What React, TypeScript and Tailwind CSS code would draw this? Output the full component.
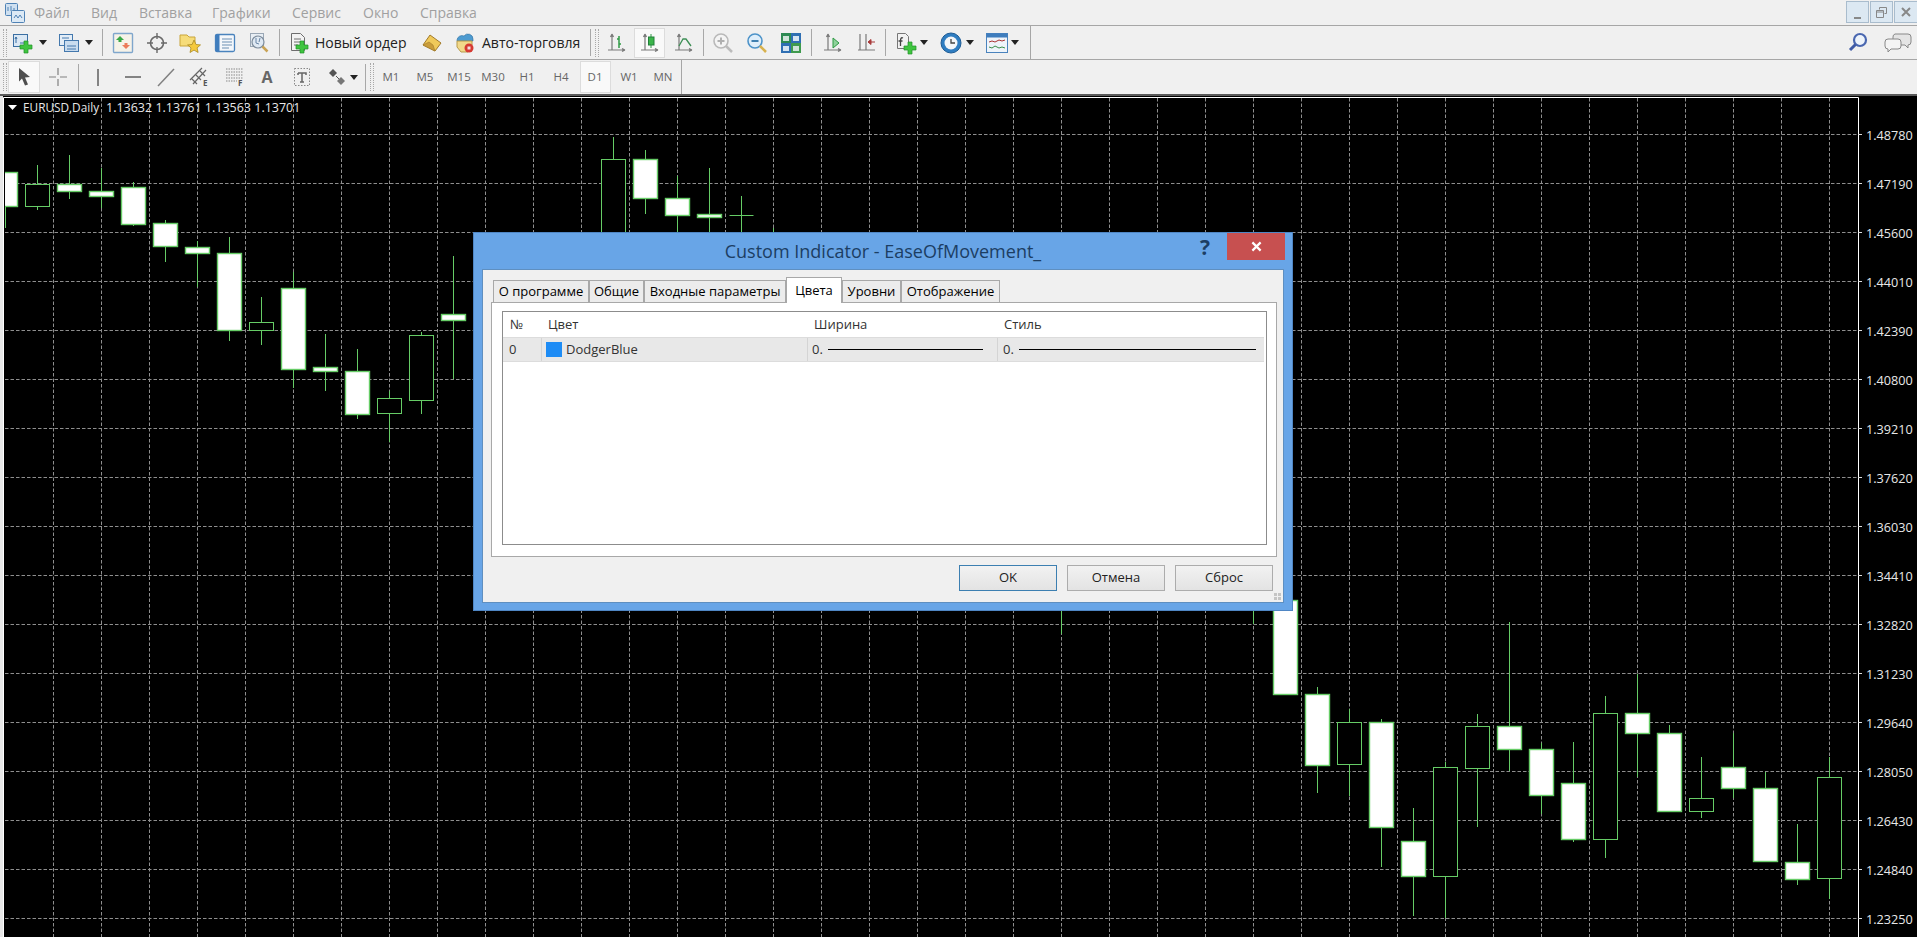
import React from 'react';

// [index, wickTop, wickBottom, bodyTop, bodyBottom, filled]
const CANDLES: [number, number, number, number, number, boolean][] = [
  [0, 172, 228, 172, 206, true], [1, 165, 210, 184, 206, false], [2, 155, 199, 184, 191, true],
  [3, 168, 208, 191, 196, true], [4, 182, 226, 187, 224, true], [5, 220, 262, 223, 246, true],
  [6, 241, 287, 247, 253, true], [7, 237, 341, 253, 330, true], [8, 297, 345, 322, 330, false],
  [9, 272, 388, 288, 369, true], [10, 334, 391, 367, 371, true], [11, 349, 419, 371, 414, true],
  [12, 391, 442, 398, 413, false], [13, 332, 414, 335, 400, false], [14, 256, 379, 314, 320, true],
  [19, 137, 260, 159, 260, false], [20, 150, 214, 159, 198, true], [21, 176, 240, 198, 215, true],
  [22, 168, 240, 214, 217, true], [23, 196, 240, 215, 215, false], [24, 228, 240, 240, 240, false],
  [33, 600, 634, 634, 634, false], [39, 600, 624, 624, 624, false], [40, 600, 695, 600, 694, true],
  [41, 687, 793, 694, 765, true], [42, 709, 796, 722, 764, false], [43, 719, 867, 722, 827, true],
  [44, 808, 916, 841, 876, true], [45, 762, 918, 767, 876, false], [46, 714, 827, 726, 768, false],
  [47, 622, 771, 726, 749, true], [48, 743, 814, 749, 795, true], [49, 742, 842, 783, 839, true],
  [50, 696, 858, 713, 839, false], [51, 674, 777, 713, 733, true], [52, 725, 812, 733, 811, true],
  [53, 757, 818, 798, 811, false], [54, 733, 798, 767, 788, true], [55, 772, 862, 788, 861, true],
  [56, 824, 885, 862, 879, true], [57, 757, 899, 777, 878, false],
];

const PRICES = ['1.48780', '1.47190', '1.45600', '1.44010', '1.42390', '1.40800', '1.39210', '1.37620', '1.36030',
  '1.34410', '1.32820', '1.31230', '1.29640', '1.28050', '1.26430', '1.24840', '1.23250'];

const GREEN = '#66cc66';
const GRID = '#8e8e8e';

const Chart = () => (
  <svg viewBox="3 96 1914 841" className="h-[841px] w-[1914px] bg-black">
    <defs>
      <clipPath id="plot"><rect x="5" y="98" width="1853" height="839" /></clipPath>
    </defs>
    <g stroke={GRID} strokeDasharray="3.500 2">
      {Array.from({ length: 38 }, (_, k) => (
        <line key={k} x1={53.5 + 48 * k} y1="98" x2={53.5 + 48 * k} y2="937" />
      ))}
      {PRICES.map((_, k) => (
        <line key={k} x1="5" y1={134.5 + 49 * k} x2="1858" y2={134.5 + 49 * k} />
      ))}
    </g>
    <g clipPath="url(#plot)" stroke={GREEN}>
      {CANDLES.map(([i, wt, wb, bt, bb, filled]) => {
        const x = 5.5 + 32 * i;
        return (
          <g key={i}>
            <line x1={x} y1={wt} x2={x} y2={wb} />
            {bb > bt && <rect x={x - 12} y={bt + 0.5} width="24" height={bb - bt} fill={filled ? '#fff' : '#000'} strokeWidth={filled ? 1.4 : 1} />}
            {bb === bt && bt !== 634 && bt !== 624 && bt !== 240 && <line x1={x - 12} y1={bt + 0.5} x2={x + 12} y2={bt + 0.5} />}
          </g>
        );
      })}
    </g>
    <path d="M3.5 937V97.5H1858.5V937" fill="none" stroke="#fff" />
    {PRICES.map((p, k) => (
      <g key={p}>
        <line x1="1858" y1={134.5 + 49 * k} x2="1862" y2={134.5 + 49 * k} stroke="#ddd" />
        <text x="1866" y={139.5 + 49 * k} fill="#e8e8e8" fontSize="12.700">{p}</text>
      </g>
    ))}
    <path d="M8 105h9l-4.5 5z" fill="#fff" />
    <text x="23" y="112" fill="#e8e8e8" fontSize="11.800">EURUSD,Daily</text>
    <text x="106" y="112" fill="#e8e8e8" fontSize="12.500">1.13632 1.13761 1.13563 1.13701</text>
  </svg>
);

const I = ({ children }: { children: React.ReactNode }) => (
  <svg viewBox="0 0 22 22" className="h-[22px] w-[22px] overflow-visible" fill="none">{children}</svg>
);

const Plus = ({ x = 0, y = 0 }: { x?: number; y?: number }) => (
  <path transform={`translate(${x} ${y})`} d="M12 9h4v4h4v4h-4v4h-4v-4H8v-4h4z" fill="#3fc53f" stroke="#1f8f2a" strokeWidth=".7" />
);

const Axes = () => (
  <path d="M6 2v16M2 18h17M6 2 4.500 5M6 2l1.500 3M19 18l-3-1.500M19 18l-3 1.500" stroke="#7a7a7a" strokeWidth="1.200" />
);

const Logo = () => (
  <svg viewBox="0 0 20 20" className="h-[20px] w-[20px]" fill="none">
    <rect x=".5" y=".5" width="12" height="12" rx="1" fill="#cfe0f0" stroke="#4f82b5" />
    <path d="M3 8V4M6 8V3M9 8V5" stroke="#4f82b5" />
    <rect x="6.500" y="7.500" width="13" height="12" rx="1" fill="#dce9f5" stroke="#4f82b5" />
    <path d="M9 15l2-3 2 3 2-3 2 3" stroke="#4f82b5" />
  </svg>
);

const AddChart = () => (
  <I>
    <rect x="1.500" y="2.500" width="14" height="12" fill="#dbe8f4" stroke="#3b6fa3" />
    <path d="M4 5v6M8 11h5M4 5 3 7M4 5l1 2" stroke="#3b6fa3" />
    <Plus />
  </I>
);
const Profiles = () => (
  <I>
    <rect x="1.500" y="2.500" width="13" height="11" fill="#e3edf7" stroke="#4478ad" />
    <rect x="6.500" y="8.500" width="14" height="11" fill="#c9dcef" stroke="#4478ad" />
    <path d="M4 6h7M9 14h9M9 17h9" stroke="#4478ad" />
  </I>
);
const MarketWatch = () => (
  <I>
    <rect x="1.500" y="1.500" width="19" height="19" rx="1" fill="#f6f2e8" stroke="#7fa6cc" strokeWidth="1.400" />
    <path d="M8 4l4 4H9.500v2h-3V8H4z" fill="#39a845" />
    <path d="M14 17l-4-4h2.500v-2h3v2H18z" fill="#ec7b5a" />
  </I>
);
const Nav = () => (
  <I>
    <circle cx="11" cy="11" r="6.500" stroke="#6a6a6a" strokeWidth="1.600" />
    <path d="M11 1v6M11 15v6M1 11h6M15 11h6" stroke="#6a6a6a" strokeWidth="1.400" />
  </I>
);
const Favorites = () => (
  <I>
    <path d="M1 3h7l2 2h6v9H1z" fill="#f6dc7a" stroke="#c9a53b" />
    <path d="M15 8l2 4.500 4.500.4-3.400 3 1 4.600-4.100-2.400-4 2.400 1-4.600-3.400-3 4.500-.4z" fill="#f5c93c" stroke="#a98a25" strokeWidth=".8" />
  </I>
);
const Terminal = () => (
  <I>
    <rect x="1.500" y="2.500" width="19" height="17" rx="1.500" fill="#f4f7fb" stroke="#4a83bd" strokeWidth="1.300" />
    <rect x="1.500" y="2.500" width="4" height="17" fill="#3f7dbd" />
    <path d="M8 7h10M8 10h10M8 13h10M8 16h7" stroke="#6b8fb3" />
  </I>
);
const Tester = () => (
  <I>
    <rect x="2.500" y="1.500" width="13" height="13" fill="#e8eef4" stroke="#9aa7b5" />
    <circle cx="10" cy="10" r="6" fill="#dfe9f3" stroke="#7d8c9c" strokeWidth="1.200" />
    <path d="M8 6v5l3 1M12 6l-1 4" stroke="#6a86a6" />
    <path d="M14.500 14.500l5 5" stroke="#c9a355" strokeWidth="2.500" />
  </I>
);
const NewOrder = () => (
  <I>
    <path d="M3.500 1.500h9l4 4v13h-13z" fill="#f3f3f3" stroke="#6e6e6e" />
    <path d="M6 7h7M6 10h7M6 13h4" stroke="#6e6e6e" />
    <Plus />
  </I>
);
const Gold = () => (
  <I>
    <path d="M9 3l11 8-6 8-12-6z" fill="#f0c95a" stroke="#a17a2a" />
    <path d="M2 13l6-3 4 3 2 6z" fill="#c99c3b" stroke="#a17a2a" strokeWidth=".6" />
  </I>
);
const AutoTrade = () => (
  <I>
    <path d="M3 8a5 5 0 0 1 7-4 5 5 0 0 1 9 3v2H3z" fill="#4d9bd0" stroke="#2f6f9f" strokeWidth=".6" />
    <path d="M3 9h15v4l-4 7H7l-4-5z" fill="#f2d98a" stroke="#b79a4a" />
    <circle cx="15" cy="16" r="4.500" fill="#d63a32" />
    <rect x="13.500" y="14.500" width="3" height="3" fill="#f6dede" />
  </I>
);
const BarsIcon = () => (
  <I>
    <Axes />
    <path d="M13 4v12M13 7h-2M13 12h2" stroke="#2f9a45" strokeWidth="1.500" />
  </I>
);
const CandleIcon = () => (
  <I>
    <Axes />
    <path d="M12 2v14" stroke="#2f9a45" />
    <rect x="9.500" y="5" width="5.500" height="8" fill="#3bb54a" stroke="#22803a" />
  </I>
);
const LineIcon = () => (
  <I>
    <Axes />
    <path d="M6 14l4-7 3 0 5 7" stroke="#3d8f55" strokeWidth="1.300" />
  </I>
);
const ZoomIn = () => (
  <I>
    <circle cx="9" cy="9" r="7" fill="#f4f4f4" stroke="#b9b9b9" strokeWidth="1.600" />
    <path d="M5.500 9h7M9 5.500v7" stroke="#b0b0b0" strokeWidth="2" />
    <path d="M14 14l6 6" stroke="#bcbcbc" strokeWidth="2.500" />
  </I>
);
const ZoomOut = () => (
  <I>
    <circle cx="9" cy="9" r="7" fill="#dfeefa" stroke="#4d93c9" strokeWidth="1.600" />
    <path d="M5.500 9h7" stroke="#3f7fb0" strokeWidth="2" />
    <path d="M14 14l6 6" stroke="#d8b24f" strokeWidth="2.500" />
  </I>
);
const Tile = () => (
  <I>
    <rect x="1" y="1" width="10" height="10" fill="#2d8a52" />
    <rect x="11" y="1" width="10" height="10" fill="#2f6fb3" />
    <rect x="1" y="11" width="10" height="10" fill="#2f6fb3" />
    <rect x="11" y="11" width="10" height="10" fill="#3f9a4d" />
    <rect x="3" y="4" width="6" height="5" fill="#cfe4d8" />
    <rect x="13" y="4" width="6" height="5" fill="#d5e4f2" />
    <rect x="3" y="14" width="6" height="5" fill="#d5e4f2" />
    <rect x="13" y="14" width="6" height="5" fill="#cfe4d8" />
  </I>
);
const AutoScroll = () => (
  <I>
    <Axes />
    <path d="M11 6l6 5-6 5z" fill="#8fd29b" stroke="#2f9a45" />
  </I>
);
const ChartShift = () => (
  <I>
    <path d="M4 2v16M10 2v16M2 18h17" stroke="#7a7a7a" strokeWidth="1.200" />
    <path d="M19 10h-5M12 10l3-2.500v5z" stroke="#a83a3a" fill="#a83a3a" />
  </I>
);
const Indicators = () => (
  <I>
    <path d="M2.500 1.500h8l3 3v12h-11z" fill="#f2f2f2" stroke="#777" />
    <path d="M8 6c-2-1-2.500 1-2.500 3v5M3.500 9h4" stroke="#444" strokeWidth="1.300" />
    <Plus x={1} y={1} />
  </I>
);
const ClockIcon = () => (
  <I>
    <circle cx="11" cy="11" r="10" fill="#2f7dc1" stroke="#1e5c95" />
    <circle cx="11" cy="11" r="6.500" fill="#f3f6f9" />
    <path d="M11 7v4h4" stroke="#444" strokeWidth="1.300" />
  </I>
);
const Template = () => (
  <I>
    <rect x=".5" y="1.500" width="21" height="19" fill="#eef4fa" stroke="#4a83bd" />
    <rect x=".5" y="1.500" width="21" height="4" fill="#3f7dbd" />
    <path d="M3 10l3-1 3 1 4-2 3 1 3-1" stroke="#a33" />
    <path d="M3 15l3 1 3-2 4 2 3-1 3 1" stroke="#3a8f4a" />
  </I>
);

const Cursor = () => (
  <I>
    <path d="M6 2l11 9-5 .5 3 7-3 1-3-7-3 3z" fill="#4f4f4f" />
  </I>
);
const Cross = () => (
  <I>
    <path d="M11 2v7M11 13v7M2 11h7M13 11h7" stroke="#808080" strokeWidth="1.200" />
  </I>
);
const VLine = () => <I><path d="M11 3v17" stroke="#777" strokeWidth="1.800" /></I>;
const HLine = () => <I><path d="M3 11h16" stroke="#777" strokeWidth="1.800" /></I>;
const Trend = () => <I><path d="M3 20 19 3" stroke="#808080" strokeWidth="1.500" /></I>;
const Channel = () => (
  <I>
    <path d="M1 14 13 2M4 18 17 4M7 9l5 5M11 5l5 5M3 13l5 5" stroke="#666" strokeWidth="1.200" />
    <text x="14" y="20" fontSize="8" fontWeight="700" fill="#555">E</text>
  </I>
);
const Fib = () => (
  <I>
    <path d="M2 3h17M2 6h17M2 9h17M2 12h17M2 15h11" stroke="#888" strokeDasharray="1.500 1" />
    <text x="14" y="20" fontSize="8" fontWeight="700" fill="#555">F</text>
  </I>
);
const TextA = () => <span className="text-[16px] font-bold leading-none text-[#666]">A</span>;
const TextT = () => (
  <I>
    <rect x="3.500" y="2.500" width="15" height="17" stroke="#888" strokeDasharray="1.500 1.500" />
    <path d="M7 7h8v2M7 7v2M11 7v9M9 16h4" stroke="#666" strokeWidth="1.500" />
  </I>
);
const Shapes = () => (
  <I>
    <path d="M7 3l4 4-4 4-4-4z" fill="#555" />
    <path d="M15 11l4 4-4 4-4-4z" fill="#777" />
    <path d="M10 10l3 3" stroke="#555" />
  </I>
);
const SearchIcon = () => (
  <I>
    <circle cx="13" cy="8" r="6" fill="#eef4fb" stroke="#4a67b0" strokeWidth="2.200" />
    <path d="M8.500 12.500 3 18" stroke="#3f5aa5" strokeWidth="3" />
  </I>
);
const ChatIcon = () => (
  <svg viewBox="0 0 28 22" className="h-[22px] w-[28px]" fill="none">
    <path d="M11 2h13a3 3 0 0 1 3 3v5a3 3 0 0 1-3 3v3l-3-3h-9a3 3 0 0 1-3-3V5a3 3 0 0 1 2-3z" fill="#e4e4e4" stroke="#888" />
    <path d="M4 7h10a3 3 0 0 1 3 3v4a3 3 0 0 1-3 3H7l-3 3v-3a3 3 0 0 1-3-3v-4a3 3 0 0 1 3-3z" fill="#f4f4f4" stroke="#888" />
  </svg>
);

const Tool = ({ className = '', children }: { className?: string; children: React.ReactNode }) => (
  <div className={`flex h-[22px] w-[22px] shrink-0 items-center justify-center ${className}`}>{children}</div>
);
const Caret = ({ className = '' }: { className?: string }) => (
  <div className={`h-0 w-0 shrink-0 border-x-[4.5px] border-t-[5px] border-x-transparent border-t-[#222] ${className}`} />
);
const Sep = ({ className = '' }: { className?: string }) => (
  <div className={`h-[27px] w-px shrink-0 bg-[#a8a8a8] ${className}`} />
);
const Grip = ({ className = '' }: { className?: string }) => (
  <div className={`h-[28px] w-[4px] shrink-0 border-x border-dotted border-[#a8a8a8] ${className}`} />
);

const MENU = [
  ['Файл', 'w-[57px]'], ['Вид', 'w-[48px]'], ['Вставка', 'w-[73px]'], ['Графики', 'w-[80px]'],
  ['Сервис', 'w-[71px]'], ['Окно', 'w-[57px]'], ['Справка', 'w-[60px]'],
];

const TIMEFRAMES = ['M1', 'M5', 'M15', 'M30', 'H1', 'H4', 'D1', 'W1', 'MN'];

const WinBtn = ({ children, className = '' }: { children: React.ReactNode; className?: string }) => (
  <div className={`mt-px flex h-[22px] w-[23px] items-center justify-center border border-[#a9bccd] bg-[#dce8f2] text-[#666] ${className}`}>{children}</div>
);

const TABS = [
  ['О программе', 'w-[96px]'], ['Общие', 'w-[55px]'], ['Входные параметры', 'w-[142px]'],
  ['Цвета', 'w-[56px]'], ['Уровни', 'w-[59px]'], ['Отображение', 'w-[99px]'],
];

const DlgButton = ({ label, primary }: { label: string; primary?: boolean }) => (
  <button className={`h-[26px] w-[98px] border bg-gradient-to-b from-[#f2f2f2] to-[#e3e3e3] text-[13px] text-[#222] ${primary ? 'border-[#3c7fb1]' : 'border-[#acacac]'}`}>{label}</button>
);

const Dialog = () => (
  <div className="absolute left-[473px] top-[232px] flex h-[379px] w-[820px] flex-col border border-[#4f86c4] bg-[#68a5e7]">
    <div className="flex h-[36px] shrink-0 items-start">
      <div className="w-[92px]" />
      <div className="flex-1 pt-[5px] text-center text-[18px] leading-[26px] text-[#1c3e63]">Custom Indicator - EaseOfMovement_</div>
      <div className="mr-[7px] flex items-start">
        <span className="mr-[17px] text-[21px] font-bold leading-[28px] text-[#1c3e63]">?</span>
        <div className="flex h-[27px] w-[58px] items-center justify-center bg-[#c75050]">
          <svg viewBox="0 0 12 12" className="h-[11px] w-[11px]"><path d="M1.500 1.500l9 9M10.500 1.500l-9 9" stroke="#fff" strokeWidth="2.400" /></svg>
        </div>
      </div>
    </div>
    <div className="relative mx-[8px] mb-[7px] flex flex-1 flex-col border border-[#5f8fc0] bg-[#f0f0f0]">
      <div className="ml-[10px] mt-[8px] flex h-[24px] shrink-0 items-end">
        {TABS.map(([t, w]) =>
          t === 'Цвета' ? (
            <div key={t} className={`relative -mb-px flex h-[26px] shrink-0 items-center justify-center border border-b-0 border-[#a8a8a8] bg-white ${w}`}>{t}</div>
          ) : (
            <div key={t} className={`flex h-[22px] shrink-0 items-center justify-center border border-b-0 border-l-[#a8a8a8] border-r-[#a8a8a8] border-t-[#a8a8a8] bg-[#ececec] ${w}`}>{t}</div>
          ),
        )}
      </div>
      <div className="ml-[8px] mr-[6px] h-[255px] shrink-0 border border-[#a8a8a8] bg-white pl-[10px] pr-[9px] pt-[8px]">
        <div className="h-[234px] border border-[#8c8c8c] bg-white">
          <div className="flex h-[25px] items-center text-[#333]">
            <div className="w-[39px] pl-[7px]">№</div>
            <div className="w-[266px] pl-[6px]">Цвет</div>
            <div className="w-[190px] pl-[6px]">Ширина</div>
            <div className="pl-[6px]">Стиль</div>
          </div>
          <div className="mr-[2px] flex h-[25px] items-center border-y border-[#dcdcdc] bg-[#e8e8e8] text-[#333]">
            <div className="flex h-full w-[39px] items-center border-r border-[#d4d4d4] pl-[6px]">0</div>
            <div className="flex h-full w-[266px] items-center border-r border-[#d4d4d4] pl-[4px]">
              <div className="h-[15px] w-[16px] bg-[#1e8cf5]" />
              <span className="ml-[4px]">DodgerBlue</span>
            </div>
            <div className="flex h-full w-[190px] items-center border-r border-[#d4d4d4] pl-[4px]">
              <span>0.</span>
              <div className="ml-[5px] h-px w-[155px] bg-black" />
            </div>
            <div className="flex h-full items-center pl-[5px]">
              <span>0.</span>
              <div className="ml-[5px] h-px w-[237px] bg-black" />
            </div>
          </div>
        </div>
      </div>
      <div className="mr-[10px] mt-[8px] flex justify-end gap-[10px]">
        <DlgButton label="OK" primary />
        <DlgButton label="Отмена" />
        <DlgButton label="Сброс" />
      </div>
      <div className="absolute bottom-[2px] right-[2px] grid grid-cols-2 gap-px">
        {[0, 1, 2, 3].map((k) => <div key={k} className="h-[3px] w-[3px] bg-[#c4c4c4]" />)}
      </div>
    </div>
  </div>
);

export default function App() {
  return (
    <div className="relative flex h-[937px] w-[1917px] flex-col overflow-hidden bg-[#f0f0f0] text-[13px] [font-family:'Open_Sans',sans-serif]">
      <div className="flex h-[26px] shrink-0 items-center border-b border-[#a6a6a6]">
        <div className="ml-[5px] mr-[9px]"><Logo /></div>
        {MENU.map(([m, w]) => (
          <div key={m} className={`text-[14px] text-[#a0a0a0] ${w}`}>{m}</div>
        ))}
        <div className="ml-auto flex self-start">
          <WinBtn className="mr-px items-end pb-[3px]"><div className="h-[2px] w-[7px] bg-[#888]" /></WinBtn>
          <WinBtn className="mr-px">
            <svg viewBox="0 0 11 11" className="h-[11px] w-[11px]" fill="none"><path d="M3.500 2.500v-2h7v6h-2M.500 3.500h7v7h-7zM.500 5h7" stroke="#888" /></svg>
          </WinBtn>
          <WinBtn className="w-[21px] border-r-0">
            <svg viewBox="0 0 10 10" className="h-[10px] w-[10px]"><path d="M1 1l8 8M9 1l-8 8" stroke="#888" strokeWidth="2" /></svg>
          </WinBtn>
        </div>
      </div>

      <div className="flex h-[34px] shrink-0 items-center border-b border-[#a6a6a6]">
        <div className="flex h-full w-[1031px] shrink-0 items-center border-r border-[#a6a6a6]">
          <Grip className="ml-[3px]" />
          <Tool className="ml-[5px]"><AddChart /></Tool>
          <Caret className="ml-[5px]" />
          <Tool className="ml-[11px]"><Profiles /></Tool>
          <Caret className="ml-[5px]" />
          <Sep className="ml-[9px]" />
          <Tool className="ml-[9px]"><MarketWatch /></Tool>
          <Tool className="ml-[12px]"><Nav /></Tool>
          <Tool className="ml-[11px]"><Favorites /></Tool>
          <Tool className="ml-[13px]"><Terminal /></Tool>
          <Tool className="ml-[12px]"><Tester /></Tool>
          <Sep className="ml-[9px]" />
          <Tool className="ml-[8px]"><NewOrder /></Tool>
          <span className="ml-[5px] w-[94px] shrink-0 whitespace-nowrap text-[14px] text-[#222]">Новый ордер</span>
          <Tool className="ml-[12px]"><Gold /></Tool>
          <Tool className="ml-[11px]"><AutoTrade /></Tool>
          <span className="ml-[6px] w-[102px] shrink-0 whitespace-nowrap text-[14px] text-[#222]">Авто-торговля</span>
          <Sep className="ml-[6px]" />
          <Grip className="ml-[4px]" />
          <Tool className="ml-[7px]"><BarsIcon /></Tool>
          <div className="ml-[6px] flex h-[30px] w-[31px] shrink-0 items-center justify-center border border-[#dcdcdc] bg-[#f9f9f9]"><CandleIcon /></div>
          <Tool className="ml-[8px]"><LineIcon /></Tool>
          <Sep className="ml-[8px]" />
          <Tool className="ml-[8px]"><ZoomIn /></Tool>
          <Tool className="ml-[12px]"><ZoomOut /></Tool>
          <Tool className="ml-[12px]"><Tile /></Tool>
          <Sep className="ml-[9px]" />
          <Tool className="ml-[10px]"><AutoScroll /></Tool>
          <Tool className="ml-[12px]"><ChartShift /></Tool>
          <Sep className="ml-[7px]" />
          <Tool className="ml-[9px]"><Indicators /></Tool>
          <Caret className="ml-[3px]" />
          <Tool className="ml-[12px]"><ClockIcon /></Tool>
          <Caret className="ml-[4px]" />
          <Tool className="ml-[12px]"><Template /></Tool>
          <Caret className="ml-[3px]" />
        </div>
        <div className="ml-auto flex items-center pr-[5px]">
          <Tool><SearchIcon /></Tool>
          <div className="ml-[15px]"><ChatIcon /></div>
        </div>
      </div>

      <div className="flex h-[34px] shrink-0 items-center">
        <div className="flex h-full w-[682px] shrink-0 items-center border-r border-[#a6a6a6]">
          <Grip className="ml-[3px]" />
          <div className="ml-[1px] flex h-[32px] w-[32px] shrink-0 items-center justify-center border border-[#dcdcdc] bg-[#f9f9f9]"><Cursor /></div>
          <Tool className="ml-[7px]"><Cross /></Tool>
          <Sep className="ml-[9px]" />
          <Tool className="ml-[8px]"><VLine /></Tool>
          <Tool className="ml-[13px]"><HLine /></Tool>
          <Tool className="ml-[11px]"><Trend /></Tool>
          <Tool className="ml-[12px]"><Channel /></Tool>
          <Tool className="ml-[13px]"><Fib /></Tool>
          <Tool className="ml-[10px]"><TextA /></Tool>
          <Tool className="ml-[13px]"><TextT /></Tool>
          <Tool className="ml-[13px]"><Shapes /></Tool>
          <Caret className="ml-[2px]" />
          <Sep className="ml-[7px]" />
          <Grip className="ml-[4px]" />
          {TIMEFRAMES.map((tf) => (
            <div key={tf} className="flex h-full w-[34px] shrink-0 items-center justify-center text-[11.5px] text-[#666]">
              {tf === 'D1' ? (
                <div className="flex h-[32px] w-[31px] items-center justify-center border border-[#dcdcdc] bg-[#f9f9f9]">{tf}</div>
              ) : tf}
            </div>
          ))}
        </div>
      </div>

      <div className="h-[2px] shrink-0 bg-[#5a5a5a]" />

      <div className="flex h-[841px] shrink-0">
        <div className="h-full w-[3px] shrink-0 bg-[#e8e8e8]" />
        <Chart />
      </div>

      <Dialog />
    </div>
  );
}
